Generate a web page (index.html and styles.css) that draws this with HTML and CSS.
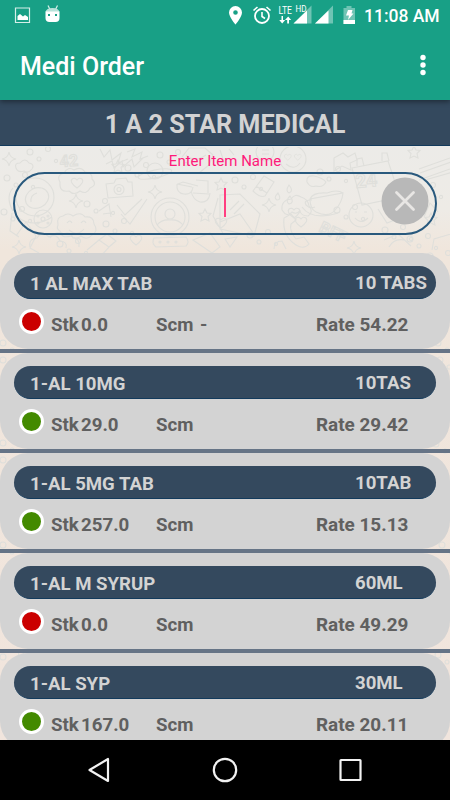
FILE: index.html
```html
<!DOCTYPE html>
<html lang="en">
<head>
<meta charset="utf-8">
<title>Medi Order</title>
<link rel="stylesheet" href="styles.css">
</head>
<body>
<div class="phone">
  <header class="appbar">
    <div class="status">
      <svg class="status-icons" width="364" height="32" viewBox="0 0 364 32">
        <path d="M15.500 8h14v14.500h-14z" fill="none" stroke="#d5efe9" stroke-width="1.200"/>
        <path d="M17.500 20v-4l2.500-2 3 2.500 2-1.500 3 2v3z" fill="#fff"/>
        <path d="M48 5.500l2 4M57.500 5.500l-2 4" stroke="#d5efe9" stroke-width="1.200"/>
        <path d="M45.500 12q1-4 7-4t7 4z" fill="#b9e2d9"/>
        <path d="M45.500 11.500h14V18q0 4-4 4h-6q-4 0-4-4z" fill="#fff"/>
        <path d="M48 14h2v2h-2zM55 14h2v2h-2z" fill="#18a086"/>
        <path fill-rule="evenodd" d="M235.500 6a6.500 6.500 0 0 0-6.500 6.500c0 4.500 6.500 12 6.500 12s6.500-7.500 6.500-12a6.500 6.500 0 0 0-6.500-6.500zm0 4.200a2.300 2.300 0 1 1 0 4.600 2.300 2.300 0 0 1 0-4.600z" fill="#fff"/>
        <circle cx="262" cy="16" r="7" fill="none" stroke="#fff" stroke-width="1.800"/>
        <path d="M262 12v4.500l3 2M253.500 10.500l4-3.500M270.500 10.500l-4-3.500" fill="none" stroke="#fff" stroke-width="1.600"/>
        <text x="278.500" y="14" class="net" textLength="13.500" lengthAdjust="spacingAndGlyphs">LTE</text>
        <path d="M281.500 16v4h-2.300l3 3.500 3-3.500h-2.200v-4zM287.200 23.500v-3.500h-2.200l3.200-3.500 3 3.500h-2.200v3.500z" fill="#fff"/>
        <path d="M293.500 23.500L311.500 5.500v18z" fill="#6fc4b4"/>
        <path d="M293.500 23.500L307 10.500v13z" fill="#fff"/>
        <text x="295.500" y="11.500" class="hd" textLength="11" lengthAdjust="spacingAndGlyphs">HD</text>
        <path d="M315 23.500L333 5.500v18z" fill="#6fc4b4"/>
        <path d="M315 23.500L328.500 10.500v13z" fill="#fff"/>
        <path d="M343.500 8h3V6h5v2h3.500v16h-11.500z" fill="#6fc4b4"/>
        <path d="M343.500 20h11.500v4h-11.500z" fill="#fff"/>
        <path d="M348 10h4.500l-1 3.500h2l-5.500 6.500 1-4.500h-3z" fill="#fff"/>
      </svg>
      <span class="time">11:08 AM</span>
    </div>
    <div class="toolbar">
      <h1>Medi Order</h1>
      <svg width="6" height="22" viewBox="0 0 6 22" fill="#fff"><circle cx="3" cy="3.500" r="2.700"/><circle cx="3" cy="11" r="2.700"/><circle cx="3" cy="18.500" r="2.700"/></svg>
    </div>
  </header>

  <main class="content">
    <svg class="doodles" width="450" height="593" viewBox="0 147 450 593">
      <defs>
        <path id="star4" d="M0-7q1 6 7 7q-6 1-7 7q-1-6-7-7q6-1 7-7z"/>
        <path id="star5" d="M0-6l2 4 4 .5-3 3 1 4.500-4-2-4 2 1-4.500-3-3 4-.5z"/>
        <path id="heart" d="M0 5q-8-6-5-9 3-2 5 1 2-3 5-1 3 3-5 9z"/>
        <g id="bubbles"><circle cx="0" cy="0" r="3"/><circle cx="9" cy="7" r="2"/><circle cx="18" cy="-3" r="2.500"/><circle cx="26" cy="9" r="1.600"/></g>
      </defs>
      <g class="ink">
        <path d="M16 168q-2-5 4-5 5-6 9 0 6 1 3 6-4 5-8 2-6 2-8-3z"/>
        <text x="60" y="167" class="doodle-text small" transform="rotate(-4 60 167)">42</text>
        <path d="M100 149l4 8 6-7 2 10 9-7-3 10 10-4M106 164l6-3 2 7 8-7 1 6 9-8 2 8 9-9M127 152l8-3-3 8 10-5-2 7 8-3"/>
        <path d="M60 182q-4-7 4-9 4-7 10-3 7-4 11 2 8 1 7 7 6 6-2 9-3 7-10 3-6 5-11 0-10 2-9-9z"/>
        <use href="#heart" x="77" y="183"/>
        <path d="M106 184l8-1 2-4 10-1 2 4 4 0 1 14-25 2z"/><circle cx="119" cy="189.500" r="5"/><circle cx="119" cy="189.500" r="2"/>
        <ellipse cx="155" cy="171" rx="8" ry="8"/><ellipse cx="155" cy="174" rx="17" ry="4" transform="rotate(-12 155 174)"/>
        <path d="M182 157l7-9 16 0 8 7-4 10-10 8M186 155q8 8 20 0M220 150l4 12M229 149l5 6"/>
        <circle cx="35" cy="197" r="19"/><ellipse cx="37" cy="198" rx="12" ry="10" transform="rotate(-25 37 198)"/><path d="M31 202q-1-7 6-9M13 188q-8 9 0 23M12 213l-2 18 9 6M17 217q17 12 35 0M16 236l10-14 10 14-6 12 9 5"/>
        <circle cx="43" cy="219" r="9"/><circle cx="43" cy="219" r="2"/><circle cx="38" cy="216" r="1"/><circle cx="48" cy="216" r="1"/><circle cx="38" cy="223" r="1"/><circle cx="48" cy="223" r="1"/>
        <path d="M58 225q-2-8 5-9 5-4 10 0 8-5 12 1 9-1 9 7 5 7-2 11-5 6-11 1-5 4-10 0-10 3-11-5-4-2-2-6zM67 223q3-4 5 0M81 223q3-4 5 0M69 230q8 7 15-1"/>
        <path d="M30 247q-2-8 7-9 5-8 12-1 8-4 11 4 8 1 6 7M50 238q6-8 14-4 7-3 9 4 7 0 6 9"/>
        <path d="M87 250l12-10 10 7-9 10M99 240l8-6 9 7-7 6M99 211l10-7 2 13M103 214l7-1M117 205l8 10 17-16M121 214l9 10 17-25"/>
        <path d="M177 184q-1 9 7 10 8 1 9-7M191 191q2 9 9 11 9 1 10-9M177 184l15 3M193 193l16 1M178 184l5-2 15 4M208 193l0-12-12-1"/>
        <circle cx="170" cy="217" r="19"/><circle cx="170" cy="217" r="15"/><circle cx="170" cy="214" r="5"/><path d="M157 225q5-6 13-5 8-1 13 5"/>
        <path d="M154 238l32-1q4 5 0 9l-30 1q-5-4-2-9z"/><circle cx="160" cy="242" r="1"/><circle cx="168" cy="242" r="1"/><circle cx="176" cy="242" r="1"/>
        <path d="M193 240l17-7 10 14-8 6zM218 198l-5 18 11 19M220 195l20-1 20 20-6 22-34-7zM220 222l20-8 14 20M230 210l9-9M234 214l10-10"/>
        <circle cx="293" cy="159" r="13"/><circle cx="265" cy="152" r="9"/><path d="M262 150h7M262 154h7M286 164q8 7 14-1"/><use href="#heart" x="288" y="157" transform="translate(115 63) scale(.6)"/><use href="#heart" x="298" y="157" transform="translate(119 63) scale(.6)"/>
        <path d="M253 191l11-15 10 6-9 14q-5 2-12-5zM256 186l11 7M278 193q-5 5-1 7 5 0 1-7zM289 185q-4 6 0 8 5-2 0-8zM290 196q-5 5-1 8 6-1 1-8zM307 182q-1-7 7-6 9 2 12 6-3 6-10 4-6 2-9-4z"/>
        <path d="M310 199q0 10 6 13 13 6 19-2 7-7 8-17zM310 199q3-7 17-6 10-4 16 0M312 200q-9 0-6 5 4 4 9 2M302 207q10 14 36 6"/>
        <path d="M282 210q-1-10 9-11 4-6 10-2 7 2 8 9 5 6-1 10-7 0-8-5-4 4-8 1-5 6-10-2z"/><use href="#heart" x="294" y="213"/>
        <path d="M284 218q-2 18 12 27 8 5 13-1l-5-7-8 2q-7-8-5-15l5-4-5-6z"/><use href="#heart" x="301" y="222"/>
        <path d="M352 168l36-7 12 36-38 8zM357 166l0-7 5-1 2 8M382 161l0-8 5 0 2 8"/><text x="356" y="188" class="doodle-text" transform="rotate(-5 356 188)">24</text>
        <circle cx="361" cy="215" r="12"/><path d="M355 218q6 7 13 0M355 212h2M364 212h3"/>
        <text x="318" y="231" class="doodle-text small" transform="rotate(26 318 231)">BFF</text>
        <path d="M334 158l9-5 5 4 7-4 2 7-7 3 1 7-9-4-8 5zM419 169l31-11M420 173l31-11M419 180l31-11M425 180l28-8M378 209l9 14 18-7M424 217l6-14 8 9M432 250l2-11 20-6M225 239l12-2-7 10zM274 249q0-8 8-8l4 8M384 240l14-6 13 12M389 247q5-9 15-7"/>
        <use href="#star4" x="9" y="159"/><use href="#star4" x="76" y="201"/><use href="#star4" x="155" y="192"/><use href="#star4" x="269" y="205"/><use href="#star4" x="19" y="247"/><use href="#star4" x="354" y="248"/>
        <use href="#star5" x="118" y="166"/><use href="#star5" x="205" y="215"/><use href="#star5" x="221" y="184"/><use href="#star5" x="414" y="152"/><use href="#star5" x="431" y="219"/>
        <use href="#heart" x="136" y="240"/><use href="#heart" x="221" y="223"/>
        <use href="#bubbles" x="30" y="152"/><use href="#bubbles" x="128" y="168"/><use href="#bubbles" x="7" y="178"/><use href="#bubbles" x="87" y="204"/><use href="#bubbles" x="106" y="224"/><use href="#bubbles" x="160" y="155"/><use href="#bubbles" x="235" y="180"/><use href="#bubbles" x="320" y="172"/><use href="#bubbles" x="250" y="235"/><use href="#bubbles" x="337" y="210"/><use href="#bubbles" x="385" y="230"/><use href="#bubbles" x="410" y="239"/><use href="#bubbles" x="415" y="188"/><use href="#bubbles" x="4" y="212"/><use href="#bubbles" x="60" y="244"/>
        <use href="#bubbles" x="3" y="343"/><use href="#bubbles" x="3" y="360"/><use href="#bubbles" x="3" y="443"/><use href="#bubbles" x="3" y="460"/><use href="#bubbles" x="3" y="545"/><use href="#bubbles" x="3" y="657"/>
        <use href="#bubbles" x="430" y="256"/><use href="#bubbles" x="438" y="343"/><use href="#bubbles" x="440" y="360"/><use href="#bubbles" x="436" y="444"/><use href="#bubbles" x="442" y="545"/><use href="#bubbles" x="438" y="655"/>
      </g>
    </svg>

    <h2 class="store">1 A 2 STAR MEDICAL</h2>
    <label class="hint">Enter Item Name</label>
    <div class="search">
      <span class="caret"></span>
      <svg class="clear" width="48" height="48" viewBox="0 0 48 48"><circle cx="24" cy="24" r="23.500" fill="#b8b8b8"/><path d="M15.500 15.500l17 17M32.500 15.500l-17 17" stroke="#e8e6e4" stroke-width="2.800" stroke-linecap="round"/></svg>
    </div>

    <section class="list">
      <article class="card">
        <div class="name"><b>1 AL MAX TAB</b><span>10 TABS</span></div>
        <div class="info"><i class="dot out"></i><span>Stk</span><span>0.0</span><span class="scm">Scm <em>-</em></span><span>Rate 54.22</span></div>
      </article>
      <article class="card">
        <div class="name"><b>1-AL 10MG</b><span>10TAS</span></div>
        <div class="info"><i class="dot"></i><span>Stk</span><span>29.0</span><span>Scm</span><span>Rate 29.42</span></div>
      </article>
      <article class="card">
        <div class="name"><b>1-AL 5MG TAB</b><span>10TAB</span></div>
        <div class="info"><i class="dot"></i><span>Stk</span><span>257.0</span><span>Scm</span><span>Rate 15.13</span></div>
      </article>
      <article class="card">
        <div class="name"><b>1-AL M SYRUP</b><span>60ML</span></div>
        <div class="info"><i class="dot out"></i><span>Stk</span><span>0.0</span><span>Scm</span><span>Rate 49.29</span></div>
      </article>
      <article class="card">
        <div class="name"><b>1-AL SYP</b><span>30ML</span></div>
        <div class="info"><i class="dot"></i><span>Stk</span><span>167.0</span><span>Scm</span><span>Rate 20.11</span></div>
      </article>
    </section>
  </main>

  <nav class="navbar">
    <svg width="24" height="26" viewBox="0 0 24 26"><path d="M2.500 13L21 2v22z"/></svg>
    <svg width="26" height="26" viewBox="0 0 26 26"><circle cx="13" cy="13" r="11.200"/></svg>
    <svg width="24" height="24" viewBox="0 0 24 24"><rect x="1.500" y="2" width="20" height="20" rx=".5"/></svg>
  </nav>
</div>
</body>
</html>
```
FILE: styles.css
```css
* { box-sizing: border-box; }
body { margin: 0; font-family: Roboto, "Liberation Sans", sans-serif; }
.phone { width: 450px; height: 800px; display: flex; flex-direction: column; overflow: hidden; }

.appbar { height: 100px; flex: none; background: #18a086; color: #fff; z-index: 2; box-shadow: 0 2px 5px rgba(0, 0, 0, .4); }
.status { height: 32px; display: flex; align-items: center; }
.status-icons { flex: none; }
.net { font-size: 10.5px; fill: #fff; }
.hd { font-size: 8.5px; fill: #fff; }
.time { font-size: 17.5px; font-weight: 500; line-height: 32px; white-space: nowrap; }
.toolbar { height: 68px; padding: 0 24.5px 0 20px; display: flex; align-items: center; justify-content: space-between; }
.toolbar h1 { margin: 0; padding-top: 2px; font-size: 25px; font-weight: 500; line-height: 30px; }
.toolbar svg { margin-top: -2px; }

.content { flex: 1; min-height: 0; overflow: hidden; position: relative; isolation: isolate; background: linear-gradient(#ecebe8 47px, #eeebe6 110px, #f0e6dc 150px, #f1e5dd); }
.doodles { position: absolute; left: 0; top: 47px; z-index: -1; }
.ink { fill: none; stroke: #dfdfdb; stroke-width: 1.1; }
.doodle-text { font-size: 19px; font-weight: 700; }
.doodle-text.small { font-size: 16px; }
.store { margin: 0; height: 46px; background: #34495e; border-bottom: 1px solid #123a5c; color: #d3d3d3; text-align: center; font-size: 25.2px; line-height: 50px; font-weight: 700; }
.hint { display: block; height: 26px; text-align: center; color: #ff1a7a; font-size: 15px; line-height: 30px; }
.search { height: 63px; margin: 0 13px; border: 2.5px solid #29597d; border-radius: 32px; display: grid; grid-template-columns: 1fr auto 1fr; align-items: center; }
.caret { grid-column: 2; width: 2px; height: 29px; margin: -2px 0 0 0; background: #ff3f81; }
.clear { grid-column: 3; justify-self: end; margin: -5px 6px 0 0; }

.list { margin-top: 18px; }
.card { height: 96px; padding: 13px 14px 0; margin-bottom: 4px; position: relative; background: #d3d3d3; border-radius: 28px; }
.card::after { content: ""; position: absolute; left: 0; right: 0; bottom: -3.5px; height: 3.5px; background: #667486; }
.name { height: 33px; padding-left: 16px; display: grid; grid-template-columns: 325px 1fr; background: #34495e; border-bottom: 1px solid #123a5c; border-radius: 17px; color: #d3d3d3; font-size: 18.6px; font-weight: 700; line-height: 36px; }
.name b { font-weight: 700; }
.name span { line-height: 34px; }
.info { height: 48px; padding-left: 5px; display: grid; grid-template-columns: 32px 30px 75px 160px 1fr; align-items: center; color: #606060; font-size: 18.7px; font-weight: 700; line-height: 24px; }
.info span { padding-top: 3px; white-space: nowrap; }
.info span:last-child { font-size: 18.9px; }
.info em { font-style: normal; margin-left: 2px; }
.dot { width: 25px; height: 25px; border: 3.8px solid #fff; border-radius: 50%; background: #438a00; margin-top: -3px; }
.dot.out { background: #cb0000; }

.navbar { height: 60px; flex: none; background: #000; display: flex; align-items: center; justify-content: center; gap: 101px; }
.navbar svg { fill: none; stroke: #f2f2f2; stroke-width: 2.2; stroke-linejoin: round; }
```
